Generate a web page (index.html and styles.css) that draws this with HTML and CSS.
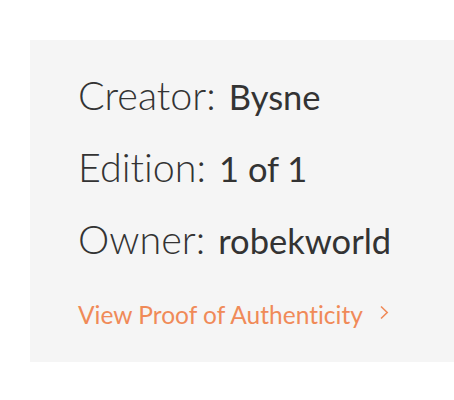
FILE: index.html
```html
<!DOCTYPE html>
<html>
<head>
<meta charset="utf-8">
<link rel="stylesheet" href="styles.css">
</head>
<body>
<div class="panel">
  <div class="row"><span class="label">Creator:</span><span class="value">Bysne</span></div>
  <div class="row"><span class="label">Edition:</span><span class="value">1 of 1</span></div>
  <div class="row"><span class="label">Owner:</span><span class="value">robekworld</span></div>
  <a class="link" href="#">View Proof of Authenticity<svg class="chev" width="10" height="15" viewBox="0 0 10 15"><path d="M2 1.5 L8.2 7.5 L2 13.5" fill="none" stroke="currentColor" stroke-width="1.6"/></svg></a>
</div>
</body>
</html>
```
FILE: styles.css
```css
html, body { margin: 0; padding: 0; background: #fff; }
body {
  padding: 40px 0 0 30px;
  font-family: Lato, "Open Sans", sans-serif;
  font-variant-ligatures: none;
}
.panel {
  background: #f5f5f5;
  height: 322px;
  box-sizing: border-box;
  padding: 63px 0 0 48px;
  display: flex;
  flex-direction: column;
}
.row {
  display: flex;
  align-items: baseline;
  height: 72px;
  line-height: 1;
  color: #333;
}
.row:first-child { margin-top: -28px; }
.label { font-weight: 300; font-size: 39.5px; margin-right: 13px; }
.value { font-weight: 400; font-size: 34.5px; }
.link {
  color: #f08a58;
  font-size: 24.5px;
  margin-top: 9px;
  text-decoration: none;
  display: flex;
  align-items: center;
  gap: 16px;
}
.chev { margin-top: -4px; }
```
